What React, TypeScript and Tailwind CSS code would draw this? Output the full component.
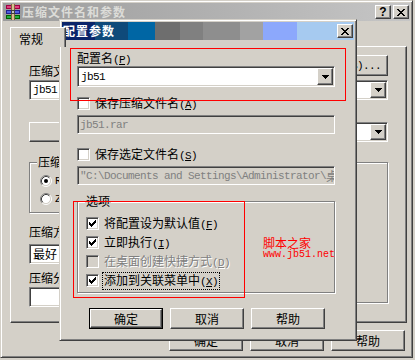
import React from "react";

const raised =
  "bg-[#d4d0c8] border border-t-white border-l-white border-r-[#404040] border-b-[#404040] shadow-[inset_-1px_-1px_#808080]";
const sunken =
  "border border-t-[#808080] border-l-[#808080] border-r-white border-b-white shadow-[inset_1px_1px_#404040,inset_-1px_-1px_#d4d0c8]";
const mono = "font-['Liberation_Mono',monospace] text-[11px] tracking-[-0.6px]";

function Acc({ s }: { s: string }) {
  const m = s.match(/^(.*)\((.)\)(.*)$/);
  if (!m) return <>{s}</>;
  return (
    <>
      {m[1]}(<span className="underline underline-offset-1">{m[2]}</span>){m[3]}
    </>
  );
}

function T({ s }: { s: string }) {
  const parts = s.match(/[\x00-\x7f]+|[^\x00-\x7f]+/g) || [];
  return (
    <>
      {parts.map((p, i) =>
        /^[\x00-\x7f]+$/.test(p) ? (
          <span key={i} className={mono}>
            <Acc s={p} />
          </span>
        ) : (
          <span key={i}>{p}</span>
        )
      )}
    </>
  );
}

function CheckGlyph() {
  const starts = [2, 3, 4, 3, 2, 1, 0];
  return (
    <svg width="7" height="7" viewBox="0 0 7 7" shapeRendering="crispEdges">
      {starts.map((y, x) => (
        <rect key={x} x={x} y={y} width="1" height="3" fill="#000" />
      ))}
    </svg>
  );
}

function Arrow() {
  return (
    <svg width="7" height="4" viewBox="0 0 7 4" shapeRendering="crispEdges">
      <rect x="0" y="0" width="7" height="1" fill="#000" />
      <rect x="1" y="1" width="5" height="1" fill="#000" />
      <rect x="2" y="2" width="3" height="1" fill="#000" />
      <rect x="3" y="3" width="1" height="1" fill="#000" />
    </svg>
  );
}

function XGlyph() {
  const rows: number[][][] = [
    [[0, 2], [6, 2]],
    [[1, 2], [5, 2]],
    [[2, 4]],
    [[3, 2]],
    [[2, 4]],
    [[1, 2], [5, 2]],
    [[0, 2], [6, 2]],
  ];
  return (
    <svg width="8" height="7" viewBox="0 0 8 7" shapeRendering="crispEdges">
      {rows.map((r, y) =>
        r.map(([x, w], j) => <rect key={`${y}-${j}`} x={x} y={y} width={w} height="1" fill="#000" />)
      )}
    </svg>
  );
}

function TitleBtn({ children, className = "" }: { children: React.ReactNode; className?: string }) {
  return (
    <div className={`${raised} w-[16px] h-[14px] flex items-center justify-center shrink-0 ${className}`}>
      {children}
    </div>
  );
}

function RarIcon() {
  return (
    <svg width="16" height="16" viewBox="0 0 16 16" shapeRendering="crispEdges" className="shrink-0">
      <rect x="1" y="1" width="14" height="4" fill="#a00040" />
      <rect x="2" y="2" width="12" height="2" fill="#e04080" />
      <rect x="1" y="6" width="14" height="4" fill="#202090" />
      <rect x="2" y="7" width="12" height="2" fill="#5060e0" />
      <rect x="1" y="11" width="14" height="4" fill="#006000" />
      <rect x="2" y="12" width="12" height="2" fill="#20b040" />
      <rect x="6" y="0" width="4" height="16" fill="#806040" />
      <rect x="7" y="0" width="2" height="16" fill="#d8c090" />
      <rect x="6" y="6" width="4" height="4" fill="#404040" />
      <rect x="7" y="7" width="2" height="2" fill="#c0c0c0" />
    </svg>
  );
}

function Checkbox({ checked, disabled }: { checked?: boolean; disabled?: boolean }) {
  return (
    <div
      className={`w-[13px] h-[13px] shrink-0 flex items-center justify-center ${sunken} ${
        disabled ? "bg-[#d4d0c8]" : "bg-white"
      }`}
    >
      {checked && <CheckGlyph />}
    </div>
  );
}

function CheckRow({
  label,
  checked,
  disabled,
  focus,
}: {
  label: string;
  checked?: boolean;
  disabled?: boolean;
  focus?: boolean;
}) {
  return (
    <div className="flex items-center h-[13px] gap-[5px] whitespace-nowrap">
      <Checkbox checked={checked} disabled={disabled} />
      <span
        className={`${disabled ? "text-[#808080] [text-shadow:1px_1px_0_#fff]" : ""} ${
          focus ? "border border-dotted border-black px-[1px] -ml-[2px]" : ""
        }`}
      >
        <T s={label} />
      </span>
    </div>
  );
}

function Radio({ checked }: { checked?: boolean }) {
  return (
    <svg width="12" height="12" viewBox="0 0 12 12" className="shrink-0">
      <circle cx="6" cy="6" r="4.5" fill="#fff" />
      <path d="M2.11 9.89 A5.5 5.5 0 0 1 9.89 2.11" stroke="#808080" fill="none" />
      <path d="M9.89 2.11 A5.5 5.5 0 0 1 2.11 9.89" stroke="#fff" fill="none" />
      <path d="M2.82 9.18 A4.5 4.5 0 0 1 9.18 2.82" stroke="#404040" fill="none" />
      <path d="M9.18 2.82 A4.5 4.5 0 0 1 2.82 9.18" stroke="#d4d0c8" fill="none" />
      {checked && <circle cx="6" cy="6" r="2" fill="#000" />}
    </svg>
  );
}

function Combo({ text, className = "" }: { text?: string; className?: string }) {
  return (
    <div className={`${sunken} bg-white flex items-stretch p-[1px] ${className}`}>
      <div className="flex-1 pl-[2px] overflow-hidden whitespace-nowrap flex items-center">
        {text && <T s={text} />}
      </div>
      <div className={`${raised} w-[16px] flex items-center justify-center`}>
        <Arrow />
      </div>
    </div>
  );
}

function Btn({
  children,
  def,
  className = "",
}: {
  children: React.ReactNode;
  def?: boolean;
  className?: string;
}) {
  if (def)
    return (
      <div className={`w-[74px] h-[21px] border border-black shrink-0 ${className}`}>
        <div className={`${raised} w-full h-full flex items-center justify-center`}>{children}</div>
      </div>
    );
  return (
    <div className={`${raised} w-[74px] h-[21px] flex items-center justify-center shrink-0 ${className}`}>
      {children}
    </div>
  );
}

function Group({
  label,
  className = "",
  children,
}: {
  label: string;
  className?: string;
  children?: React.ReactNode;
}) {
  return (
    <div className={`relative border border-[#808080] shadow-[inset_1px_1px_#fff,1px_1px_#fff] ${className}`}>
      <span className="absolute left-[7px] top-[-8px] bg-[#d4d0c8] px-[1px] leading-[14px] whitespace-nowrap">
        <T s={label} />
      </span>
      {children}
    </div>
  );
}

const winFrame =
  "border border-t-[#d4d0c8] border-l-[#d4d0c8] border-r-[#404040] border-b-[#404040] shadow-[inset_1px_1px_#fff,inset_-1px_-1px_#808080] p-[2px] bg-[#d4d0c8]";

export default function App() {
  return (
    <div className="relative w-[415px] h-[360px] bg-[#d4d0c8] overflow-hidden font-['Noto_Sans_CJK_SC',sans-serif] text-[12px] leading-[14px] text-black select-none">
      {/* Back window */}
      <div className={`w-[413px] h-[358px] flex flex-col ${winFrame}`}>
        <div className="h-[18px] flex items-center bg-[linear-gradient(to_right,#9c9c9c,#b4b4b4_60%,#c6c6c6)] pl-[2px] pr-[1px] shrink-0">
          <RarIcon />
          <span className="ml-[1px] font-bold tracking-[1px] text-[#dcdcd8] flex-1 whitespace-nowrap">
            压缩文件名和参数
          </span>
          <TitleBtn>
            <span className="font-['Liberation_Sans',sans-serif] font-bold text-[12px] leading-none">?</span>
          </TitleBtn>
          <TitleBtn className="ml-[2px]">
            <XGlyph />
          </TitleBtn>
        </div>
        <div className="flex-1 flex flex-col pl-[7px] pr-[3px] pt-[6px]">
          <div className="relative z-10 w-[56px] h-[20px] -mb-[1px] bg-[#d4d0c8] border-t border-l border-r border-t-white border-l-white border-r-[#404040] shadow-[inset_-1px_0_#808080] pl-[8px] pt-[4px]">
            常规
          </div>
          <div className="w-[397px] h-[277px] border border-t-white border-l-white border-r-[#404040] border-b-[#404040] shadow-[inset_-1px_-1px_#808080] px-[18px] flex flex-col">
            <div className="mt-[8px] h-[21px] flex justify-between items-start">
              <span className="pt-[9px] whitespace-nowrap">
                <T s="压缩文件名(A)" />
              </span>
              <Btn>
                <T s="浏览(B)..." />
              </Btn>
            </div>
            <Combo text="jb51.rar" className="mt-[4px] h-[20px]" />
            <div className="mt-[22px] h-[20px] flex items-center">
              <Btn className="!w-[150px] !h-[20px]">
                <T s="配置(F)..." />
              </Btn>
              <span className="ml-auto mr-[4px] whitespace-nowrap">
                <T s="更新方式(U)" />
              </span>
              <Combo text="添加并替换文件" className="w-[150px] h-[20px]" />
            </div>
            <div className="mt-[20px] flex items-start">
              <div className="w-[160px] flex flex-col">
                <Group label="压缩文件格式" className="h-[51px] pt-[12px] pl-[10px] flex flex-col gap-[6px]">
                  <div className="flex items-center gap-[3px] h-[12px]">
                    <Radio checked />
                    <T s="RAR" />
                  </div>
                  <div className="flex items-center gap-[3px] h-[12px]">
                    <Radio />
                    <T s="ZIP" />
                  </div>
                </Group>
                <span className="mt-[12px] whitespace-nowrap">
                  <T s="压缩方式(C)" />
                </span>
                <Combo text="最好" className="mt-[3px] h-[20px]" />
                <span className="mt-[7px] whitespace-nowrap">
                  <T s="压缩分卷大小,字节(V)" />
                </span>
                <div className={`${sunken} bg-white h-[20px]`} />
              </div>
              <Group label="压缩选项" className="ml-auto w-[188px] h-[141px]" />
            </div>
          </div>
          <div className="mt-[7px] flex justify-end gap-[7px] pr-[2px]">
            <Btn>确定</Btn>
            <Btn>取消</Btn>
            <Btn>帮助</Btn>
          </div>
        </div>
      </div>

      {/* Front dialog */}
      <div className={`absolute left-[59px] top-[19px] w-[298px] h-[322px] flex flex-col ${winFrame}`}>
        <div className="h-[18px] flex items-center pl-[1px] pr-[1px] shrink-0 bg-[linear-gradient(to_right,#0a246a_0px,#0a246a_33px,#0f4a7a_33px,#0f4a7a_66px,#0066a4_66px,#0066a4_93px,#6e6e6e_93px,#6e6e6e_118px,#808080_118px,#808080_141px,#8e8e8e_141px,#8e8e8e_178px,#a2a2a2_178px,#a2a2a2_201px,#8ca8fc_201px,#8ca8fc_235px,#a6caf0_235px)]">
          <span className="flex-1 font-bold tracking-[1px] text-white whitespace-nowrap">配置参数</span>
          <TitleBtn>
            <XGlyph />
          </TitleBtn>
        </div>
        <div className="flex-1 flex flex-col pl-[15px] pt-[11px]">
          <span className="whitespace-nowrap h-[14px]">
            <T s="配置名(P)" />
          </span>
          <Combo text="jb51" className="mt-[1px] w-[258px] h-[21px]" />
          <div className="mt-[10px]">
            <CheckRow label="保存压缩文件名(A)" />
          </div>
          <div
            className={`${sunken} bg-[#d4d0c8] mt-[5px] w-[258px] h-[19px] flex items-center pl-[2px] overflow-hidden whitespace-nowrap text-[#808080]`}
          >
            <T s="jb51.rar" />
          </div>
          <div className="mt-[14px]">
            <CheckRow label="保存选定文件名(S)" />
          </div>
          <div
            className={`${sunken} bg-[#d4d0c8] mt-[5px] w-[258px] h-[19px] flex items-center pl-[2px] overflow-hidden whitespace-nowrap text-[#808080]`}
          >
            <T s={'"C:\\Documents and Settings\\Administrator\\桌面'} />
          </div>
          <Group label="选项" className="mt-[16px] w-[258px] h-[92px] pt-[15px] pl-[8px] flex flex-col gap-[6px]">
            <CheckRow label="将配置设为默认值(F)" checked />
            <CheckRow label="立即执行(I)" checked />
            <CheckRow label="在桌面创建快捷方式(D)" disabled />
            <CheckRow label="添加到关联菜单中(X)" checked focus />
          </Group>
          <div className="mt-[15px] ml-[12px] flex gap-[7px]">
            <Btn def>确定</Btn>
            <Btn>取消</Btn>
            <Btn>帮助</Btn>
          </div>
        </div>
      </div>

      {/* Red annotation boxes */}
      <div className="absolute left-[70px] top-[48px] w-[276px] h-[53px] border border-[#ff0000] pointer-events-none" />
      <div className="absolute left-[73px] top-[201px] w-[172px] h-[97px] border border-[#ff0000] pointer-events-none" />

      {/* Watermark */}
      <div className="absolute left-[263px] top-[236px] flex flex-col text-[#ff0000] leading-[14px]">
        <span>脚本之家</span>
        <span className="font-['Liberation_Mono',monospace] text-[10px] leading-[12px] -mt-[1px]">
          www.jb51.net
        </span>
      </div>
    </div>
  );
}
